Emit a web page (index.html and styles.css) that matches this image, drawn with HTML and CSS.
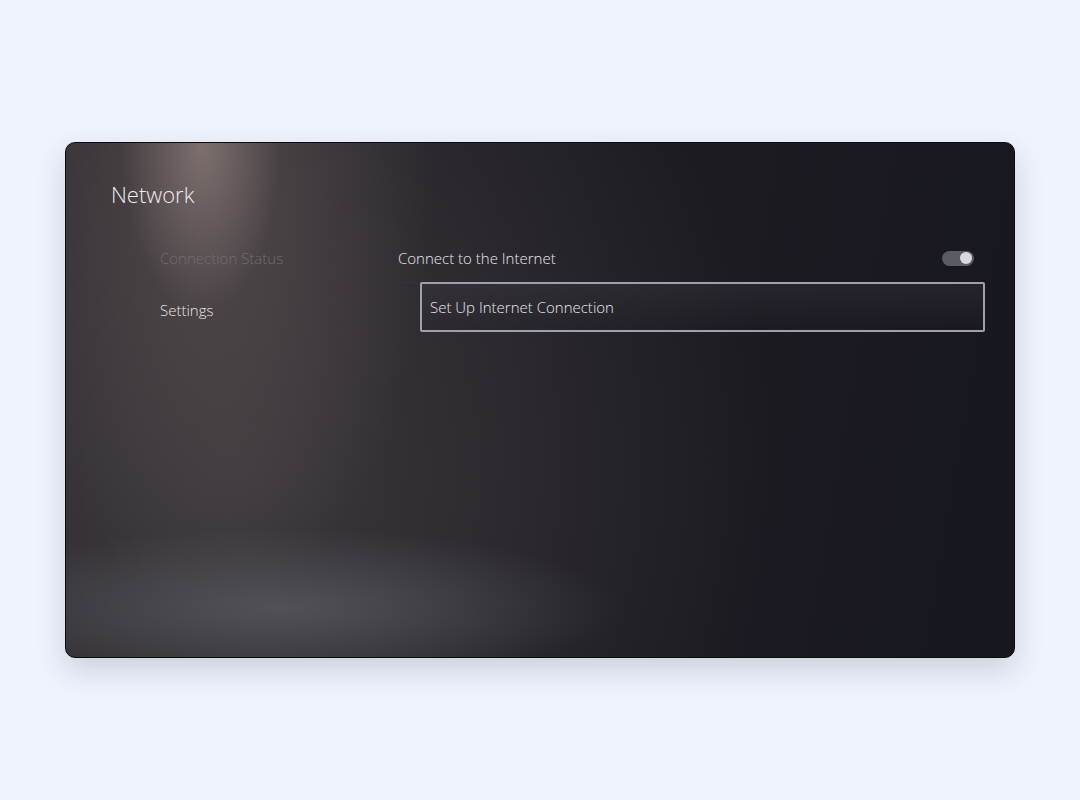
FILE: index.html
```html
<!DOCTYPE html>
<html lang="en">
<head>
    <meta charset="UTF-8">
    <meta name="viewport" content="width=device-width, initial-scale=1.0">
    <title>Network</title>
    <link rel="stylesheet" href="styles.css">
</head>
<body>
    <div class="screen">
        <h1 class="screen-title">Network</h1>

        <div class="layout">
            <nav class="side-menu">
                <div class="side-item dim">Connection Status</div>
                <div class="side-item">Settings</div>
            </nav>

            <div class="options">
                <div class="option-row">
                    <span>Connect to the Internet</span>
                    <span class="toggle"><span class="knob"></span></span>
                </div>
                <div class="option-box">Set Up Internet Connection</div>
            </div>
        </div>
    </div>
</body>
</html>
```

FILE: styles.css
```css
body {
    margin: 0;
    padding: 142px 0 0 65px;
    background: #eff3fd;
    font-family: "Open Sans", Arial, sans-serif;
    height: 800px;
    box-sizing: border-box;
}

.screen {
    width: 950px;
    height: 516px;
    box-sizing: border-box;
    padding: 36px 30px 0 45px;
    border: 1px solid #0b0b10;
    border-radius: 10px;
    color: #e4e3e6;
    box-shadow: 0 12px 30px rgba(40, 50, 80, 0.18);
    background:
        radial-gradient(ellipse 80px 170px at 135px 0, rgba(180, 160, 155, 0.45), rgba(180, 160, 155, 0) 100%),
        radial-gradient(ellipse 220px 460px at 150px 10px, rgba(120, 105, 105, 0.45), rgba(120, 105, 105, 0) 100%),
        radial-gradient(ellipse 340px 80px at 215px 465px, rgba(95, 98, 104, 0.65), rgba(95, 98, 104, 0) 100%),
        radial-gradient(ellipse 540px 600px at 170px 330px, rgba(68, 63, 67, 0.75), rgba(68, 63, 67, 0) 100%),
        linear-gradient(100deg, #29272b 0%, #1d1c23 55%, #17171f 100%);
}

/* Titre */
.screen-title {
    margin: 0;
    font-size: 22px;
    font-weight: 300;
    color: #eeecef;
    line-height: 30px;
}

.layout {
    display: grid;
    grid-template-columns: 238px 576px;
    margin-top: 25px;
    margin-left: 49px;
}

/* Menu de gauche */
.side-menu {
    display: flex;
    flex-direction: column;
    gap: 30px;
    padding-top: 13px;
}

.side-item {
    font-size: 15px;
    font-weight: 300;
    line-height: 22px;
    color: #e8e6e9;
}

.side-item.dim {
    color: #726d6f;
}

/* Options */
.options {
    display: flex;
    flex-direction: column;
}

.option-row {
    display: flex;
    justify-content: space-between;
    align-items: center;
    height: 48px;
    font-size: 15px;
    font-weight: 300;
    color: #e8e7eb;
    border-bottom: 1px solid #34343c;
}

.toggle {
    position: relative;
    width: 32px;
    height: 15px;
    border-radius: 8px;
    background: #5b5b64;
}

.toggle .knob {
    position: absolute;
    right: 2px;
    top: 1.5px;
    width: 12px;
    height: 12px;
    border-radius: 50%;
    background: #d9d8de;
}

.option-box {
    margin: -1px -11px 0 22px;
    height: 50px;
    box-sizing: border-box;
    display: flex;
    align-items: center;
    padding: 0 8px;
    font-size: 15px;
    font-weight: 300;
    color: #e8e7eb;
    border: 2px solid #a29fac;
    border-radius: 2px;
    background: linear-gradient(180deg, rgba(60, 58, 66, 0.35), rgba(28, 28, 36, 0.2));
}
```
